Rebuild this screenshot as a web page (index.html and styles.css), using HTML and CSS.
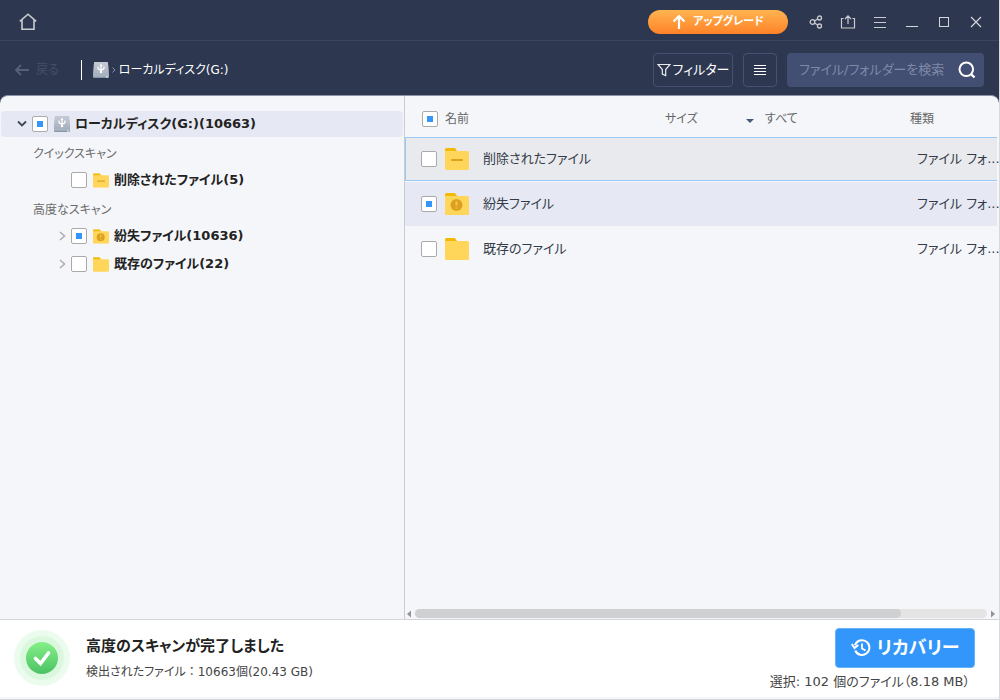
FILE: index.html
```html
<!DOCTYPE html>
<html lang="ja">
<head>
<meta charset="utf-8">
<meta name="viewport" content="width=device-width, initial-scale=1">
<title>ローカルディスク(G:)</title>
<link rel="stylesheet" href="styles.css">
</head>
<body>
<svg class="defs" aria-hidden="true">
  <defs>
    <symbol id="folder" viewBox="0 0 24 22">
      <path d="M0 1.500Q0 0 1.500 0H10l2 3v3H0z" fill="#f3ba04"/>
      <path d="M0 3h22.500Q24 3 24 4.500V20.500Q24 22 22.500 22H1.500Q0 22 0 20.500z" fill="#ffd65a"/>
    </symbol>
    <symbol id="folder-minus" viewBox="0 0 24 22">
      <use href="#folder"/>
      <path d="M7 12h10" stroke="#dda120" stroke-width="2" stroke-linecap="round"/>
    </symbol>
    <symbol id="folder-lost" viewBox="0 0 24 22">
      <use href="#folder"/>
      <circle cx="11.500" cy="12" r="6" fill="#dda120"/>
      <path d="M11.500 8.500v4M11.500 14.500v1" stroke="#f6c84e" stroke-width="2"/>
    </symbol>
    <linearGradient id="metal" x1="0" y1="0" x2="0" y2="1">
      <stop offset="0" stop-color="#c6ccd5"/><stop offset="1" stop-color="#a3adbc"/>
    </linearGradient>
    <symbol id="drive" viewBox="0 0 16 16">
      <path d="M1 1Q1 0 2 0h12q1 0 1 1l1 13v1q0 1-1 1H1q-1 0-1-1v-1z" fill="#8795a6"/>
      <path d="M1 1Q1 0 2 0h12q1 0 1 1l1 13H0z" fill="url(#metal)"/>
      <path d="M0 14.200h16" stroke="#b9c1cc" stroke-width=".8"/>
      <path d="M13 15h2" stroke="#e8f0f4"/>
      <path d="M8 2.500v8M5 4.500v1.500q0 1.500 3 2q3-.5 3-2V4.500" fill="none" stroke="#fff" stroke-width="1.200"/>
      <path d="M6.500 4L8 2l1.500 2z" fill="#fff"/><circle cx="8" cy="10" r="1.200" fill="#fff"/>
    </symbol>
  </defs>
</svg>
<div class="window">
  <header class="titlebar">
    <button class="icon-btn home" aria-label="ホーム"><svg width="18" height="18" viewBox="0 0 18 18"><path d="M.8 8.300L9 1.200l8.200 7.100M3 7v9.200h12V7" fill="none" stroke="#c9cbd0" stroke-width="1.600"/></svg></button>
    <button class="upgrade"><svg width="14" height="16" viewBox="0 0 14 16"><path d="M7 15V2M1.500 7.500L7 2l5.500 5.500" fill="none" stroke="#fff" stroke-width="2.200"/></svg>アップグレード</button>
    <div class="window-tools">
      <button class="icon-btn" aria-label="共有"><svg width="16" height="16" viewBox="0 0 16 16"><g fill="none" stroke="#c9cbd0" stroke-width="1.300"><circle cx="4.500" cy="8" r="2.300"/><circle cx="11.500" cy="4" r="2"/><circle cx="11.500" cy="12" r="2"/><path d="M6.500 7l3.200-2M6.500 9l3.200 2"/></g></svg></button>
      <button class="icon-btn" aria-label="エクスポート"><svg width="16" height="16" viewBox="0 0 16 16"><path d="M3.500 4.500H1.500v9.500h13V4.500h-2M8 10V2M5 5l3-3.200L11 5" fill="none" stroke="#c9cbd0" stroke-width="1.200"/></svg></button>
      <button class="icon-btn" aria-label="メニュー"><svg width="16" height="16" viewBox="0 0 16 16"><path d="M2 3.500h12M2 8.500h12M2 13.500h12" stroke="#c9cbd0"/></svg></button>
      <button class="icon-btn" aria-label="最小化"><svg width="16" height="16" viewBox="0 0 16 16"><path d="M2 12.500h12" stroke="#d5d7dc"/></svg></button>
      <button class="icon-btn" aria-label="最大化"><svg width="16" height="16" viewBox="0 0 16 16"><rect x="3.500" y="3.500" width="9" height="9" fill="none" stroke="#d5d7dc"/></svg></button>
      <button class="icon-btn" aria-label="閉じる"><svg width="16" height="16" viewBox="0 0 16 16"><path d="M3 3l10 10M13 3L3 13" stroke="#d5d7dc" stroke-width="1.200"/></svg></button>
    </div>
  </header>

  <nav class="toolbar">
    <button class="back" disabled><svg width="14" height="12" viewBox="0 0 14 12"><path d="M14 6H1M6 1L1 6l5 5" fill="none" stroke="#566079" stroke-width="1.800"/></svg>戻る</button>
    <span class="divider"></span>
    <div class="path">
      <svg width="16" height="16"><use href="#drive"/></svg>
      <svg width="4" height="6" viewBox="0 0 4 6"><path d="M.5.500L3 3L.5 5.500" fill="none" stroke="#8a92a4"/></svg>
      <span>ローカルディスク(G:)</span>
    </div>
    <div class="tools">
      <button class="tool filter"><svg width="14" height="14" viewBox="0 0 14 14"><path d="M1 1.500h12L8.700 6.500v6l-3.400-1.500V6.500z" fill="none" stroke="#e8eaee" stroke-width="1.200"/></svg>フィルター</button>
      <button class="tool list" aria-label="一覧表示"><svg width="12" height="12" viewBox="0 0 12 12"><path d="M0 1.500h12M0 4.500h12M0 7.500h12M0 10.500h12" stroke="#fff"/></svg></button>
      <form class="search">
        <input type="text" aria-label="検索" placeholder="ファイル/フォルダーを検索">
        <button type="button" class="icon-btn" aria-label="検索する"><svg width="18" height="18" viewBox="0 0 18 18"><circle cx="8.300" cy="8.300" r="6.800" fill="none" stroke="#fff" stroke-width="2"/><path d="M13 13l3.500 3.500" stroke="#fff" stroke-width="2.400"/></svg></button>
      </form>
    </div>
  </nav>

  <main class="content">
    <aside class="tree">
      <div class="node root">
        <button class="icon-btn toggle" aria-label="折りたたむ"><svg width="10" height="8" viewBox="0 0 10 8"><path d="M1 1.500l4 4 4-4" fill="none" stroke="#3d4658" stroke-width="1.800"/></svg></button>
        <input type="checkbox" id="root" checked>
        <svg width="16" height="16"><use href="#drive"/></svg>
        <label for="root">ローカルディスク(G:)(10663)</label>
      </div>
      <div class="group">クイックスキャン</div>
      <div class="node child">
        <span class="toggle"></span>
        <input type="checkbox" id="deleted">
        <svg width="16" height="15"><use href="#folder-minus"/></svg>
        <label for="deleted">削除されたファイル(5)</label>
      </div>
      <div class="group">高度なスキャン</div>
      <div class="node child">
        <button class="icon-btn toggle" aria-label="展開"><svg width="7" height="10" viewBox="0 0 7 10"><path d="M1 1l4.500 4L1 9" fill="none" stroke="#aaacb0" stroke-width="1.500"/></svg></button>
        <input type="checkbox" id="lost" checked>
        <svg width="16" height="15"><use href="#folder-lost"/></svg>
        <label for="lost">紛失ファイル(10636)</label>
      </div>
      <div class="node child">
        <button class="icon-btn toggle" aria-label="展開"><svg width="7" height="10" viewBox="0 0 7 10"><path d="M1 1l4.500 4L1 9" fill="none" stroke="#aaacb0" stroke-width="1.500"/></svg></button>
        <input type="checkbox" id="existing">
        <svg width="16" height="15"><use href="#folder"/></svg>
        <label for="existing">既存のファイル(22)</label>
      </div>
    </aside>

    <section class="files">
      <table>
        <colgroup><col class="c-check"><col><col class="c-size"><col class="c-date"><col class="c-type"></colgroup>
        <thead>
          <tr>
            <th><input type="checkbox" aria-label="すべて選択" checked></th>
            <th>名前</th>
            <th class="size">サイズ</th>
            <th><label class="period"><svg width="8" height="8" viewBox="0 0 8 8"><path d="M0 4h8L4 8z" fill="#465a78"/></svg><select aria-label="期間"><option>すべて</option></select></label></th>
            <th>種類</th>
          </tr>
        </thead>
        <tbody>
          <tr class="focused">
            <td><input type="checkbox" id="f1"></td>
            <td><label class="name" for="f1"><svg width="24" height="22"><use href="#folder-minus"/></svg>削除されたファイル</label></td>
            <td></td><td></td><td class="kind">ファイル フォ...</td>
          </tr>
          <tr class="marked">
            <td><input type="checkbox" id="f2" checked></td>
            <td><label class="name" for="f2"><svg width="24" height="22"><use href="#folder-lost"/></svg>紛失ファイル</label></td>
            <td></td><td></td><td class="kind">ファイル フォ...</td>
          </tr>
          <tr>
            <td><input type="checkbox" id="f3"></td>
            <td><label class="name" for="f3"><svg width="24" height="22"><use href="#folder"/></svg>既存のファイル</label></td>
            <td></td><td></td><td class="kind">ファイル フォ...</td>
          </tr>
        </tbody>
      </table>
      <div class="scroll" aria-hidden="true">
        <svg width="4" height="8" viewBox="0 0 4 8"><path d="M4 0.500v7L0 4z" fill="#929292"/></svg>
        <div class="track"><div class="thumb"></div></div>
        <svg width="4" height="8" viewBox="0 0 4 8"><path d="M0 0.500v7L4 4z" fill="#929292"/></svg>
      </div>
    </section>
  </main>

  <footer class="status">
    <svg width="56" height="56" viewBox="0 0 56 56">
      <defs><linearGradient id="ok" x1="0" y1="0" x2="0" y2="1"><stop offset="0" stop-color="#84f087"/><stop offset="1" stop-color="#4cc264"/></linearGradient></defs>
      <circle cx="28" cy="28" r="28" fill="#ebfcee"/><circle cx="28" cy="28" r="22" fill="#dbf8df"/>
      <circle cx="28" cy="28" r="16" fill="url(#ok)"/>
      <path d="M21.500 28.500l5 5 8-10.500" fill="none" stroke="#fff" stroke-width="3.600" stroke-linecap="round"/>
    </svg>
    <div class="message">
      <h1>高度のスキャンが完了しました</h1>
      <p>検出されたファイル<span class="full-width">：</span>10663個(20.43 GB)</p>
    </div>
    <div class="action">
      <button class="recover"><svg width="20" height="18" viewBox="0 0 20 18"><path d="M4.200 11.500A7.400 7.400 0 1 0 4 6.200M.8 5l2.700 4 3.800-3" fill="none" stroke="#fff" stroke-width="2"/><path d="M11 4.500V9.500l3.500 2" fill="none" stroke="#fff" stroke-width="1.800"/></svg>リカバリー</button>
      <p>選択: 102 個のファイル（8.18 MB）</p>
    </div>
  </footer>
</div>
</body>
</html>
```
FILE: styles.css
```css
* { box-sizing: border-box; }

body {
  margin: 0;
  background: #2d374f;
  color: #222;
  font: 12px/18px "DejaVu Sans", "Noto Sans CJK JP", sans-serif;
  font-feature-settings: "palt";
}

button, input, select { font: inherit; font-feature-settings: inherit; }
button { padding: 0; border: 0; background: none; color: inherit; }
svg { flex: none; }
p, h1 { margin: 0; }

.defs { position: absolute; width: 0; height: 0; }
.full-width { font-feature-settings: normal; }

.window {
  display: flex;
  flex-direction: column;
  min-height: 100vh;
  border-right: 1px solid #d8d9dd;
}

.icon-btn { display: flex; align-items: center; justify-content: center; }

/* title bar */
.titlebar {
  display: flex;
  align-items: center;
  height: 41px;
  padding: 3px 15px 0 19px;
  border-bottom: 1px solid #3a4560;
}
.upgrade {
  display: flex;
  align-items: center;
  justify-content: center;
  gap: 7px;
  width: 140px;
  height: 24px;
  margin-left: auto;
  border-radius: 12px;
  background: linear-gradient(#ffb450, #ff8228);
  color: #fff;
  font-size: 11px;
  font-weight: bold;
}
.window-tools { display: flex; gap: 16px; margin-left: 20px; }

/* toolbar */
.toolbar {
  display: flex;
  align-items: center;
  height: 54px;
  padding: 4px 15px 0;
  color: #fff;
}
.back {
  display: flex;
  align-items: center;
  gap: 7px;
  color: #454f68;
}
.divider { width: 1px; height: 20px; margin: 0 11px 0 22px; background: #fff; }
.path { display: flex; align-items: center; gap: 3px; font-size: 12px; }
.tools { display: flex; gap: 10px; margin-left: auto; }
.tool {
  display: flex;
  align-items: center;
  justify-content: center;
  gap: 2px;
  height: 34px;
  border: 1px solid #455275;
  border-radius: 4px;
  font-size: 13px;
}
.filter { width: 80px; }
.list { width: 34px; }
.search {
  display: flex;
  align-items: center;
  width: 197px;
  height: 34px;
  padding: 0 8px 0 12px;
  border-radius: 4px;
  background: #434f72;
}
.search input {
  flex: 1;
  min-width: 0;
  padding: 0;
  border: 0;
  outline: 0;
  background: none;
  color: #fff;
  font-size: 13px;
}
.search input::placeholder { color: #7f8aa9; opacity: 1; }

/* content */
.content {
  display: flex;
  flex: 1;
  border-top: 1px solid #8c92a3;
  border-radius: 8px 8px 0 0;
  background: #f5f6fa;
}
input[type="checkbox"] {
  appearance: none;
  flex: none;
  display: block;
  width: 16px;
  height: 16px;
  margin: 0;
  border: 1px solid #aaa;
  border-radius: 2px;
  background: #fff;
}
input[type="checkbox"]:checked {
  background: linear-gradient(#3296fa, #3296fa) center / 6px 6px no-repeat #fff;
}

.tree {
  flex: none;
  width: 405px;
  padding-top: 14px;
  border-right: 1px solid #ccc;
}
.node {
  display: flex;
  align-items: center;
  height: 28px;
  font-size: 13px;
  font-weight: bold;
}
.node .toggle { width: 16px; }
.root {
  height: 26px;
  margin: 1px;
  padding-left: 13px;
  border-radius: 4px;
  background: #e6e9f3;
}
.root input { margin: 0 6px 0 2px; }
.node label { margin-left: 5px; }
.child { padding-left: 54px; }
.child input { margin: 0 6px 0 1px; }
.group {
  height: 28px;
  padding: 4px 0 0 33px;
  color: #6b6b6b;
  line-height: 24px;
}

.files { display: flex; flex: 1; flex-direction: column; min-width: 0; }
table {
  width: calc(100% - 2px);
  border-collapse: separate;
  border-spacing: 0;
  table-layout: fixed;
}
.c-check { width: 40px; }
.c-size { width: 81px; }
.c-date { width: 164px; }
.c-type { width: 87px; }
th {
  height: 41px;
  padding: 5px 0 0;
  color: #666;
  font-weight: normal;
  text-align: left;
}
th input[type="checkbox"] { margin-left: 17px; }
.period { display: flex; align-items: center; gap: 11px; }
.period select {
  appearance: none;
  padding: 0;
  border: 0;
  background: none;
  color: inherit;
}
td {
  height: 45px;
  padding: 0;
  border-top: 1px solid #f5f6fa;
  color: #333a48;
  font-size: 13px;
}
td input[type="checkbox"] { margin-left: 16px; }
.focused td {
  height: 44px;
  border-top: 1px solid #99c9f7;
  border-bottom: 1px solid #99c9f7;
  background: #e9eaee;
}
.focused td:first-child { border-left: 1px solid #99c9f7; }
.focused td input[type="checkbox"] { margin-left: 15px; }
.marked td { background: #e6e9f3; }
.name { display: flex; align-items: center; gap: 14px; }
.kind { padding-left: 7px; white-space: nowrap; }

.scroll {
  display: flex;
  align-items: center;
  gap: 4px;
  height: 11px;
  margin-top: auto;
  padding: 0 4px 0 2px;
}
.track { flex: 1; height: 9px; border-radius: 5px; background: #e4e4e4; }
.thumb { width: 85%; height: 9px; border-radius: 5px; background: #ced0d2; }

/* status bar */
.status {
  display: flex;
  align-items: center;
  height: 81px;
  padding: 0 24px 3px 14px;
  border-top: 1px solid #d4d5d8;
  border-bottom: 1px solid #d4d5d8;
  background: #fff;
  box-shadow: inset 0 -2px #f5f6fa;
}
.message { margin-left: 16px; }
.message h1 { font-size: 15px; line-height: 24px; }
.message p { padding-top: 4px; color: #444; line-height: 20px; }
.action {
  display: flex;
  flex-direction: column;
  align-items: flex-end;
  margin-left: auto;
  padding-top: 3px;
}
.recover {
  display: flex;
  align-items: center;
  justify-content: center;
  gap: 6px;
  width: 140px;
  height: 40px;
  border: 1px solid #64b0fb;
  border-radius: 4px;
  background: #3296fa;
  color: #fff;
  font-size: 18px;
  font-weight: bold;
}
.action p { padding: 4px 5px 0 0; color: #444; font-size: 13px; line-height: 20px; }
```
